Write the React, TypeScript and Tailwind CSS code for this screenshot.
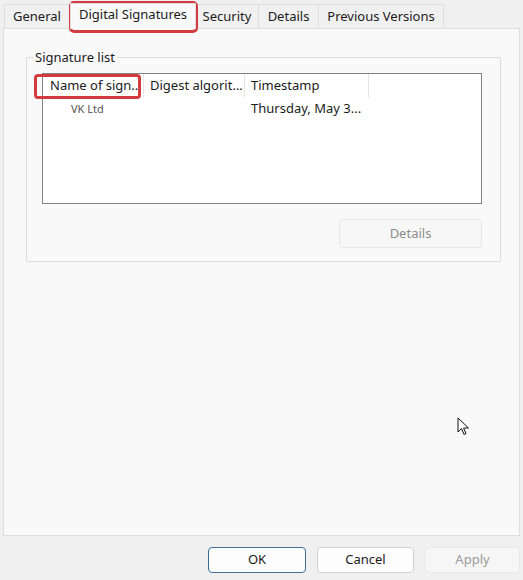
import React from "react";

const font = { fontFamily: '"Segoe UI", "Noto Sans", "Liberation Sans", sans-serif' };

export default function App() {
  return (
    <div className="relative w-[523px] h-[580px] bg-[#f0f0f0] text-[13px] text-[#1b1b1b] flex flex-col overflow-hidden" style={font}>
      {/* Tabs */}
      <div className="flex items-end h-[28px] pl-[4px] shrink-0">
        <div className="w-[66px] h-[24px] border border-b-0 border-[#dedede] bg-[#f0f0f0] flex items-center justify-center">General</div>
        <div className="relative w-[126px] h-[26px] bg-[#f9f9f9] border border-b-0 border-[#dedede] flex items-start justify-center pt-[1px] z-10 -mb-px">
          Digital Signatures
        </div>
        <div className="w-[63px] h-[24px] border border-b-0 border-l-0 border-[#dedede] bg-[#f0f0f0] flex items-center justify-center">Security</div>
        <div className="w-[60px] h-[24px] border border-b-0 border-l-0 border-[#dedede] bg-[#f0f0f0] flex items-center justify-center">Details</div>
        <div className="w-[125px] h-[24px] border border-b-0 border-l-0 border-[#dedede] bg-[#f0f0f0] flex items-center justify-center">Previous Versions</div>
      </div>

      {/* Panel */}
      <div className="mx-[3px] h-[508px] border border-[#dedede] bg-[#f9f9f9] shrink-0 pt-[20px] pl-[22px] pr-[18px]">
        <fieldset className="border border-[#dcdcdc] pl-[15px] pr-[18px] pb-[13px] pt-[8px] rounded-[1px]">
          <legend className="-ml-[9px] px-[2px] leading-[16px] text-[#1b1b1b]">Signature list</legend>
          <div className="relative h-[131px] border border-[#828282] bg-white">
            <div className="flex h-[24px] items-center">
              <div className="w-[101px] h-full flex items-center pl-[7px] border-r border-[#e5e5e5]">Name of sign...</div>
              <div className="w-[101px] h-full flex items-center pl-[6px] border-r border-[#e5e5e5]">Digest algorit...</div>
              <div className="w-[124px] h-full flex items-center pl-[6px] border-r border-[#e5e5e5]">Timestamp</div>
            </div>
            <div className="flex h-[22px] items-center">
              <div className="w-[101px] pl-[28px] text-[11px] text-[#555]">VK Ltd</div>
              <div className="w-[101px]"></div>
              <div className="w-[124px] pl-[6px]">Thursday, May 3...</div>
            </div>
            {/* annotation */}
            <div className="absolute left-[-9px] top-[0px] w-[107px] h-[25px] border-[3px] border-[#d43b3f] rounded-[4px]"></div>
          </div>
          <div className="flex justify-end mt-[15px]">
            <div className="w-[143px] h-[29px] rounded-[4px] border border-[#e6e6e6] bg-[#f7f7f7] text-[#8c8c8c] flex items-center justify-center">Details</div>
          </div>
        </fieldset>
      </div>

      {/* Footer */}
      <div className="flex justify-end items-center gap-[11px] pr-[3px] pt-[11px]">
        <div className="w-[98px] h-[26px] rounded-[4px] border border-[#3f6f96] bg-[#fdfdfd] flex items-center justify-center">OK</div>
        <div className="w-[97px] h-[26px] rounded-[4px] border border-[#d0d0d0] bg-[#fdfdfd] flex items-center justify-center">Cancel</div>
        <div className="w-[95px] h-[26px] rounded-[4px] border border-[#e8e8e8] bg-[#f6f6f6] text-[#9a9a9a] flex items-center justify-center">Apply</div>
      </div>

      {/* red annotation around tab */}
      <div className="absolute left-[69px] top-[1px] w-[129px] h-[32px] border-[3px] border-[#d43b3f] rounded-[5px]"></div>

      {/* mouse cursor */}
      <svg className="absolute left-[457px] top-[417px]" width="14" height="20" viewBox="0 0 14 20">
        <path d="M1 1 L1 15 L4.5 11.5 L7 17.5 L9 16.6 L6.6 11 L11.5 11 Z" fill="white" stroke="#111" strokeWidth="1" strokeLinejoin="round" />
      </svg>
    </div>
  );
}
